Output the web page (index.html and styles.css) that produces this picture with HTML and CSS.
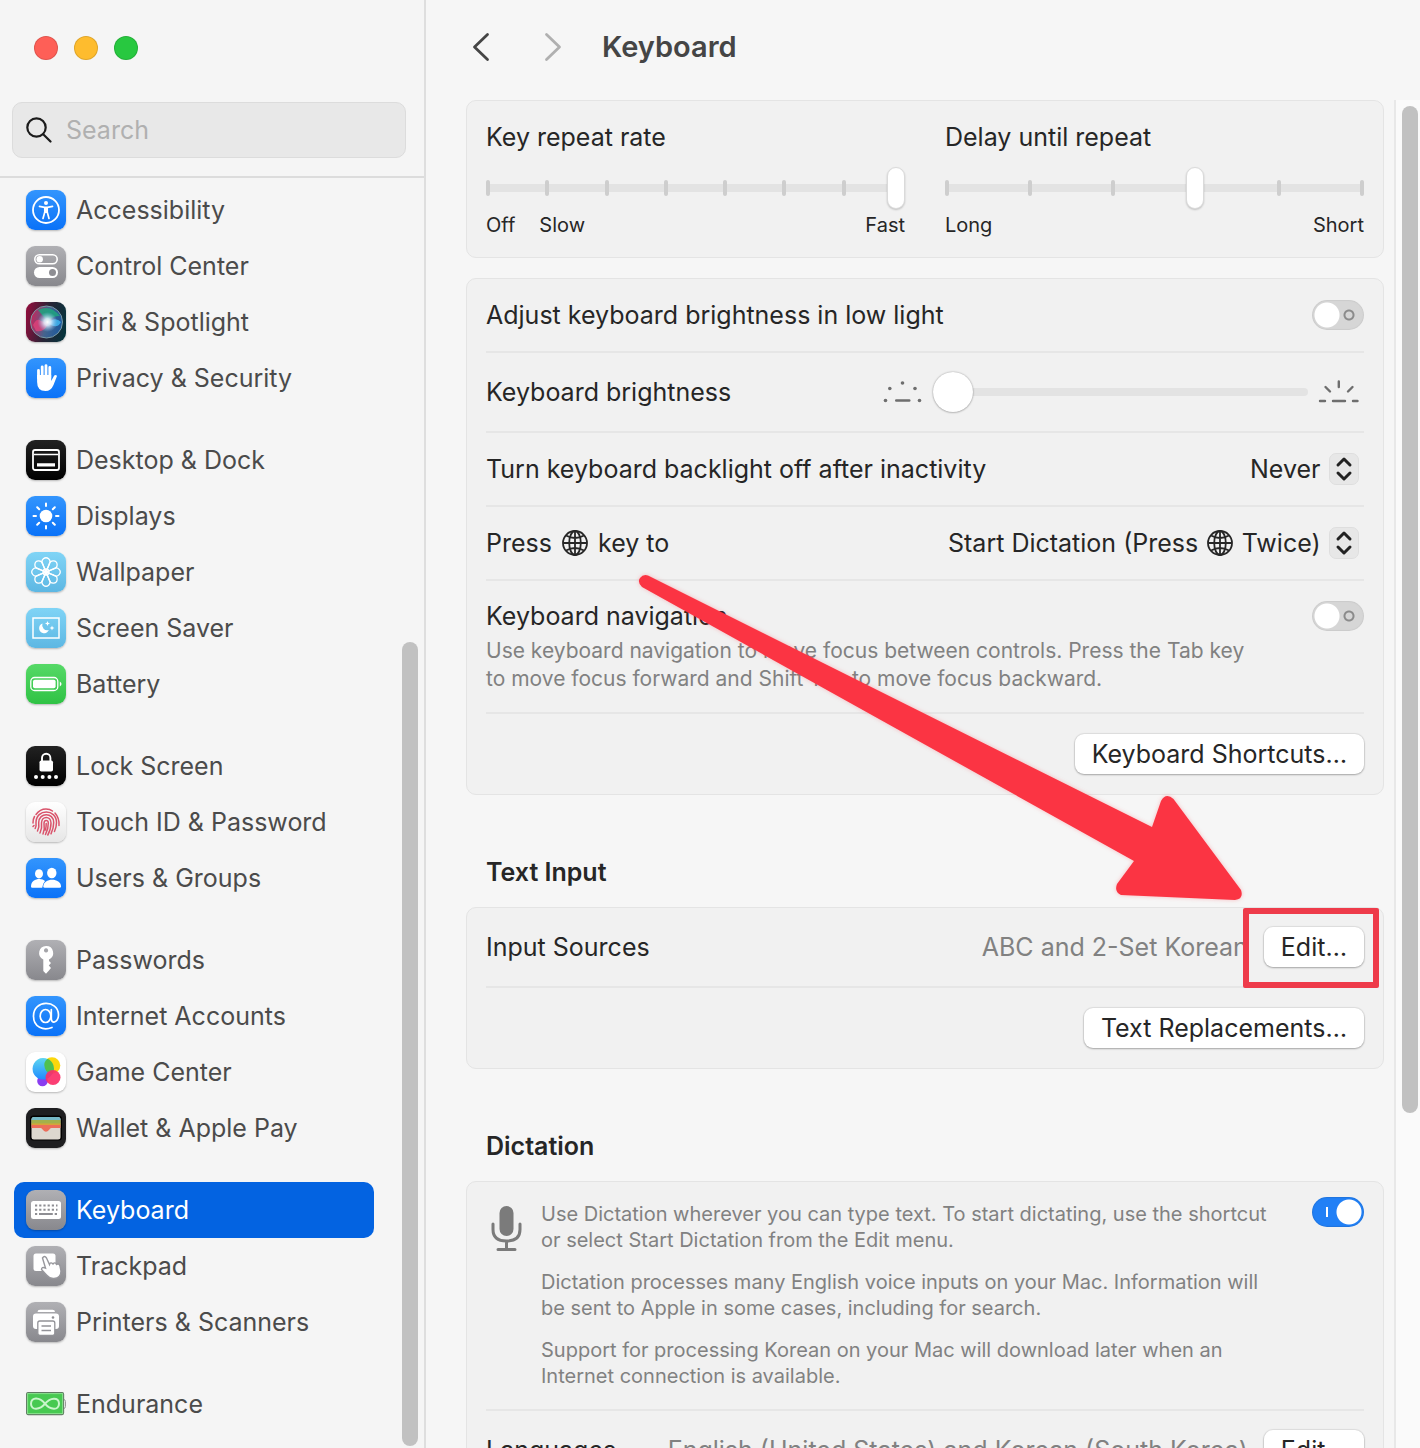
FILE: index.html
```html
<!DOCTYPE html>
<html lang="en">
<head>
	<meta charset="utf-8">
	<title>Keyboard</title>
	<link rel="stylesheet" href="styles.css">
</head>
<body>
	<aside class="sidebar">
		<div class="lights">
			<button class="light red" aria-label="Close"></button>
			<button class="light yellow" aria-label="Minimize"></button>
			<button class="light green" aria-label="Zoom"></button>
		</div>

		<label class="search">
			<svg width="26" height="26" viewBox="0 0 26 26" fill="none" stroke="#1c1c1c" stroke-width="2.2" stroke-linecap="round"><circle cx="10.500" cy="10.500" r="9.200"/><path d="M17.200 17.200L24.500 24.500"/></svg>
			<input type="search" placeholder="Search" aria-label="Search">
		</label>

		<div class="side-body">
			<nav class="menu">
				<div class="group">
					<a href="#accessibility"><svg class="icon blue" viewBox="0 0 40 40"><circle cx="20" cy="20" r="13" fill="none" stroke="#fff" stroke-width="1.800"/><circle cx="20" cy="13" r="2" fill="#fff"/><path d="M13.500 16.300L18.500 17.300h3L26.500 16.300M18.800 17.500V22L17 28.500M21.200 17.500V22L23 28.500" fill="none" stroke="#fff" stroke-width="1.700" stroke-linecap="round"/><path d="M18 17h4v6h-4z" fill="#fff"/></svg>Accessibility</a>
					<a href="#control"><svg class="icon gray" viewBox="0 0 40 40"><rect x="8.800" y="8.800" width="22.400" height="9" rx="4.500" fill="none" stroke="#fff" stroke-width="1.600"/><circle cx="13.700" cy="13.300" r="3.200" fill="#fff"/><rect x="8" y="21" width="24" height="11" rx="5.500" fill="#fff"/><circle cx="26.500" cy="26.500" r="3.500" fill="#8e8e93"/></svg>Control Center</a>
					<a href="#siri"><svg class="icon siri" viewBox="0 0 40 40">
						<defs>
							<linearGradient id="siri-bg" x1="0" y1=".4" x2="1" y2=".6"><stop offset="0" stop-color="#8a0f3c"/><stop offset=".5" stop-color="#2a2436"/><stop offset="1" stop-color="#06333c"/></linearGradient>
							<radialGradient id="siri-glow"><stop offset="0" stop-color="#fff"/><stop offset=".35" stop-color="#e6f3ff" stop-opacity=".85"/><stop offset="1" stop-color="#8fc0ee" stop-opacity="0"/></radialGradient>
							<linearGradient id="siri-ball" x1="0" y1=".4" x2="1" y2=".6"><stop offset="0" stop-color="#d32a62"/><stop offset=".5" stop-color="#4a6f9c"/><stop offset="1" stop-color="#1c5fae"/></linearGradient>
						</defs>
						<rect width="40" height="40" fill="url(#siri-bg)"/><circle cx="20.500" cy="20" r="16" fill="url(#siri-ball)" stroke="#7a9aa5" stroke-width="1" fill-opacity=".85"/>
						<path d="M12 8Q24 2 34 14Q27 13 22 20Z" fill="#1fa57f" opacity=".85"/><path d="M7 23q4-8 8-4l7 2q-3 10-12 8z" fill="#e8407a" opacity=".75"/><path d="M22 21q7-7 13-1q-4 8-13 1z" fill="#3fb5f0" opacity=".85"/><circle cx="21.500" cy="20" r="10" fill="url(#siri-glow)"/></svg>Siri &amp; Spotlight</a>
					<a href="#privacy"><svg class="icon blue" viewBox="0 0 40 40"><g fill="none" stroke="#fff" stroke-width="2.800" stroke-linecap="round"><path d="M12.500 20v-7.500M16.200 20V8.800M20 20V7.600M23.800 20V9.500"/></g><path d="M11.100 17H25.200V23L28.200 17.600Q30 16 31 18L27.500 27Q25 33 19.500 33Q11.100 33 11.100 24Z" fill="#fff"/></svg>Privacy &amp; Security</a>
				</div>
				<div class="group">
					<a href="#desktop"><svg class="icon black" viewBox="0 0 40 40"><rect x="7" y="10" width="26" height="20" rx="2" fill="none" stroke="#fff" stroke-width="1.800"/><path d="M8 14.500h24" stroke="#fff" stroke-width="1.300"/><path d="M11 23.300h18v3.200H11z" fill="#fff"/></svg>Desktop &amp; Dock</a>
					<a href="#displays"><svg class="icon blue" viewBox="0 0 40 40"><circle cx="20" cy="20" r="6.300" fill="#fff"/><path d="M20 7.500v2.500M20 30v2.500M7.500 20H10M30 20h2.500M11.200 11.200l2 2M26.800 26.800l2 2M11.200 28.800l2-2M26.800 13.200l2-2" stroke="#fff" stroke-width="2" stroke-linecap="round"/></svg>Displays</a>
					<a href="#wallpaper"><svg class="icon sky" viewBox="0 0 40 40"><g fill="none" stroke="#fff" stroke-width="1.300"><g id="petals"><path d="M20 20L16.800 12A3.900 3.900 0 1 1 23.200 12Z"/><path d="M20 20L28 16.800A3.900 3.900 0 1 1 28 23.200Z"/><path d="M20 20L23.200 28A3.900 3.900 0 1 1 16.800 28Z"/><path d="M20 20L12 23.200A3.900 3.900 0 1 1 12 16.800Z"/></g><use href="#petals" transform="rotate(45 20 20)"/><circle cx="20" cy="20" r="3"/></g></svg>Wallpaper</a>
					<a href="#saver"><svg class="icon sky" viewBox="0 0 40 40"><rect x="7" y="10" width="26" height="20" fill="none" stroke="#fff" stroke-width="1.500"/><path d="M16.500 15.500a5 5 0 1 0 6.300 6.500a5 5 0 0 1-6.300-6.500z" fill="#fff"/><path d="M21.500 13l.7 1.800l1.800.7l-1.800.7l-.7 1.800l-.7-1.800l-1.800-.7l1.800-.7zM26 17.500l.7 1.800l1.800.7l-1.800.7l-.7 1.800l-.7-1.800l-1.800-.7l1.800-.7z" fill="#fff"/></svg>Screen Saver</a>
					<a href="#battery"><svg class="icon lime" viewBox="0 0 40 40"><rect x="4.800" y="13.500" width="27" height="13" rx="3.800" fill="none" stroke="#fff" stroke-width="1.300"/><rect x="7" y="15.700" width="22.600" height="8.600" rx="1.800" fill="#fff"/><path d="M33.800 17.500q3.500 2.500 0 5z" fill="#fff"/></svg>Battery</a>
				</div>
				<div class="group">
					<a href="#lock"><svg class="icon black" viewBox="0 0 40 40"><rect x="13.500" y="14.500" width="13.500" height="11" rx="1.800" fill="#fff"/><path d="M16 15.500v-3.500a4.200 4.200 0 0 1 8.400 0v3.500" fill="none" stroke="#fff" stroke-width="1.900"/><g fill="#fff"><circle cx="10" cy="31" r="2"/><circle cx="16.700" cy="31" r="2"/><circle cx="23.400" cy="31" r="2"/><circle cx="30" cy="31" r="2"/></g></svg>Lock Screen</a>
					<a href="#touch"><svg class="icon white" viewBox="0 0 40 40"><g fill="none" stroke="#d9536b" stroke-width="1.500" stroke-linecap="round"><path d="M10 12.500Q14 7 20 7Q24 7 26.500 9M29 11Q33.500 16 33 23.500M7 21Q7 17 8.500 14.500M7 24.500L8 23.500M9.200 26.500Q10.500 24 10 20.500C10 6.500 30.500 6.500 30.500 20.500Q30.500 25 28.500 29.500M11.500 29Q13.500 25 12.700 20.500C13 10 27.700 10 27.700 20.500Q27.700 26.500 25 31.800M14 31Q16.300 26.500 15.500 21C15.500 13.500 25 13.500 25 21Q25 27.500 21.800 33M17 32Q19 27 18 21.500C18 17.500 22.300 17.500 22.300 21Q22.500 26.500 19.500 32.500M20.200 21.500Q20.300 25 19.300 28"/></g></svg>Touch ID &amp; Password</a>
					<a href="#users"><svg class="icon blue" viewBox="0 0 40 40"><g fill="#fff"><ellipse cx="13" cy="15.800" rx="4" ry="4.600"/><path d="M5 28.500C5 20 16 19.500 19 23Q16.500 26 16.200 29.800H6.300Q5 29.800 5 28.500z"/><ellipse cx="25.800" cy="15" rx="4.700" ry="5.200"/><path d="M17.300 28.500C17.300 19.500 35 19.500 35 28.500Q35 29.800 33.500 29.800H18.800Q17.300 29.800 17.300 28.500z"/></g></svg>Users &amp; Groups</a>
				</div>
				<div class="group">
					<a href="#passwords"><svg class="icon gray" viewBox="0 0 40 40"><path fill="#fff" fill-rule="evenodd" d="M20 6a7 7 0 0 1 3 13.400V21l2 2l-2.200 2.500l2.200 2.500l-2.500 3L20 33.800L17.300 31V19.400A7 7 0 0 1 20 6zM20 8.300a2.100 2.100 0 1 0 .1 0z"/></svg>Passwords</a>
					<a href="#internet"><svg class="icon blue" viewBox="0 0 40 40"><g fill="none" stroke="#fff" stroke-width="1.700" stroke-linecap="round"><ellipse cx="19.500" cy="20" rx="5.300" ry="6.500"/><path d="M25.300 13.500V22.500Q25.500 26.500 28.500 26Q32.500 24.500 32.500 18.500C32 3.500 7.500 3.500 7.500 20C7.500 31.500 17.500 34.800 26 31.500"/></g></svg>Internet Accounts</a>
					<a href="#game"><svg class="icon plain" viewBox="0 0 40 40">
						<defs><linearGradient id="game-blue" x1="0" y1="0" x2="0" y2="1"><stop offset="0" stop-color="#5fd6f0"/><stop offset="1" stop-color="#1f8bff"/></linearGradient></defs>
						<circle cx="26" cy="13.500" r="8.300" fill="#fcd70c"/><circle cx="16.500" cy="29" r="5.300" fill="#8a3df0"/><path d="M17 6a10.500 10.800 0 1 0 .1 0z" fill="url(#game-blue)"/><path d="M21.500 6.800a11 11 0 0 1 5.500 14.800a8.300 8.300 0 0 1-5.500-14.800z" fill="#50c04e"/><circle cx="27" cy="25.500" r="7.500" fill="#fb2f68" opacity=".92"/></svg>Game Center</a>
					<a href="#wallet"><svg class="icon wallet" viewBox="0 0 40 40"><rect x="4" y="7.500" width="32" height="25" rx="3.500" fill="#000"/><rect x="5.500" y="9" width="29" height="22.500" rx="2.500" fill="#ddd8ce"/><path d="M5.500 12V11.500a2.500 2.500 0 0 1 2.500-2.500h24a2.500 2.500 0 0 1 2.500 2.500V12z" fill="#75b8c6"/><path d="M5.500 12h29v4h-29z" fill="#a3b04b"/><path d="M5.500 15.500h29v2h-29z" fill="#d7a33a"/><path d="M5.500 17h29v3H25.500Q24 20 23 22Q20 25.500 17 22Q16 20 14.500 20h-9z" fill="#ec6d59"/></svg>Wallet &amp; Apple Pay</a>
				</div>
				<div class="group">
					<a href="#keyboard" class="active" aria-current="page"><svg class="icon gray" viewBox="0 0 40 40"><rect x="5" y="11" width="30" height="18" rx="2.500" fill="#fff"/><g stroke="#8e8e93" stroke-width="2" stroke-dasharray="2.200 2"><path d="M9 15.500h22.500M9 19.800h22.500"/><path d="M9 24h2.200M28.700 24h2.300" stroke-dasharray="none"/></g><path d="M13 24h13.800" stroke="#8e8e93" stroke-width="2"/></svg>Keyboard</a>
					<a href="#trackpad"><svg class="icon gray" viewBox="0 0 40 40"><rect x="7.500" y="7.500" width="22" height="17.500" rx="2.500" fill="#fff"/><path d="M16.500 12Q18.500 9 20.500 12L23.500 18.500Q24.500 15.500 27 18Q29 15.500 30.500 18.500Q33 17 34 20L35 25Q35 32 28 32.500Q24 33 20.500 29L15.500 23.500Q15.500 20.500 19.500 22Z" fill="#fff" stroke="#97979c" stroke-width="1.400"/></svg>Trackpad</a>
					<a href="#printers"><svg class="icon gray" viewBox="0 0 40 40"><path d="M11.500 10q0-2.200 2.500-2.200h12.500q2.500 0 2.500 2.200z" fill="#fff"/><rect x="7" y="11.500" width="26" height="15.500" rx="3" fill="#fff"/><circle cx="27" cy="15.500" r="1.300" fill="#8e8e93"/><rect x="11.800" y="19" width="17" height="14.300" rx="2" fill="#fff" stroke="#929297" stroke-width="1.300"/><path d="M15.500 24h9.500M15.500 28.500h9.500" stroke="#929297" stroke-width="1.500"/></svg>Printers &amp; Scanners</a>
				</div>
				<div class="group">
					<a href="#endurance"><svg class="icon flat" viewBox="0 0 40 40"><path d="M38 15.500q1.500.5 1.500 2v5q0 1.500-1.500 2" fill="none" stroke="#999" stroke-width="1"/><rect x=".6" y="8.600" width="37" height="22" rx="1.500" fill="#47c951" stroke="#5f7a62" stroke-width="1.100"/><rect x="1.600" y="9.600" width="35" height="20" fill="none" stroke="#8be08f"/><path d="M19 19.700C14 13 5 12.500 5 19.700S14 26 19 19.700S33 12.500 33 19.700S24 26 19 19.700z" fill="none" stroke="#c9f5cb" stroke-width="2"/></svg>Endurance</a>
				</div>
			</nav>
			<div class="scroll"><div class="thumb"></div></div>
		</div>
	</aside>

	<main class="main">
		<header class="top">
			<button class="nav-btn" aria-label="Back"><svg width="18" height="30" viewBox="0 0 18 30" fill="none" stroke="#454545" stroke-width="2.800" stroke-linecap="round" stroke-linejoin="round"><path d="M15.500 2.500L2.500 15l13 12.500"/></svg></button>
			<button class="nav-btn" aria-label="Forward"><svg width="18" height="30" viewBox="0 0 18 30" fill="none" stroke="#b0b0b0" stroke-width="2.800" stroke-linecap="round" stroke-linejoin="round"><path d="M2.500 2.500L15.500 15l-13 12.500"/></svg></button>
			<h1>Keyboard</h1>
		</header>

		<div class="main-body">
			<div class="content">
				<section class="card rates">
					<div class="rate">
						<label for="repeat">Key repeat rate</label>
						<div class="slider">
							<div class="ticks"><i></i><i></i><i></i><i></i><i></i><i></i><i></i><i></i></div>
							<input type="range" id="repeat" class="pill" min="0" max="7" value="7">
						</div>
						<div class="ends"><span>Off</span><span>Slow</span><span class="last">Fast</span></div>
					</div>
					<div class="rate">
						<label for="delay">Delay until repeat</label>
						<div class="slider">
							<div class="ticks"><i></i><i></i><i></i><i></i><i></i><i></i></div>
							<input type="range" id="delay" class="pill" min="0" max="5" value="3">
						</div>
						<div class="ends"><span>Long</span><span class="last">Short</span></div>
					</div>
				</section>

				<section class="card">
					<div class="row">
						<label for="adjust">Adjust keyboard brightness in low light</label>
						<input type="checkbox" id="adjust" class="switch">
					</div>
					<div class="row">
						<label for="bright">Keyboard brightness</label>
						<div class="bright">
							<svg width="40" height="26" viewBox="0 0 40 26" fill="#6e6e6e"><circle cx="2.500" cy="21.500" r="1.800"/><circle cx="6.800" cy="9.500" r="1.800"/><circle cx="19.500" cy="4" r="1.800"/><circle cx="32" cy="9.500" r="1.800"/><circle cx="36.500" cy="21.500" r="1.800"/><rect x="12" y="20.300" width="15.500" height="2.400" rx="1.200"/></svg>
							<input type="range" id="bright" class="round" value="0">
							<svg width="42" height="26" viewBox="0 0 42 26" stroke="#6e6e6e" stroke-width="2.400" stroke-linecap="round"><path d="M2 22h5M15 22h12M35 22h4.500M7.500 8l4.500 4.500M20.800 2.500v5.500M34.500 8L30 12.500"/></svg>
						</div>
					</div>
					<div class="row">
						<label for="off">Turn keyboard backlight off after inactivity</label>
						<select id="off"><option>Never</option></select>
					</div>
					<div class="row">
						<label for="globe">Press <svg class="globe" viewBox="0 0 26 26" fill="none" stroke="#262626" stroke-width="1.800"><circle cx="13" cy="13" r="12"/><ellipse cx="13" cy="13" rx="5.800" ry="12"/><path d="M13 1v24M1 13h24M4 5.500q9 5 18 0M4 20.500q9-5 18 0"/></svg> key to</label>
						<select id="globe" class="with-globe"><option>Start Dictation (Press &emsp;&thinsp; Twice)</option></select>
					</div>
					<div class="row nav-row">
						<div>
							<label for="navigation">Keyboard navigation</label>
							<p>Use keyboard navigation to move focus between controls. Press the Tab key to move focus forward and Shift Tab to move focus backward.</p>
						</div>
						<input type="checkbox" id="navigation" class="switch">
					</div>
					<div class="row end">
						<button class="btn">Keyboard Shortcuts…</button>
					</div>
				</section>

				<h2>Text Input</h2>
				<section class="card">
					<div class="row">
						<span>Input Sources</span>
						<div class="value">
							<span>ABC and 2-Set Korean</span>
							<div class="marked">
								<button class="btn">Edit…</button>
								<svg class="arrow" width="605" height="328" viewBox="638 573 605 328"><path d="M648 574.500L1152 826L1161 800Q1166 791 1173.500 798L1241 889Q1244 898 1235 899L1121 894Q1114 891 1117 883L1134 860L642 586Q637 581 640 577Q643 573 648 574.500z" fill="#fb3443"/></svg>
							</div>
						</div>
					</div>
					<div class="row end">
						<button class="btn">Text Replacements…</button>
					</div>
				</section>

				<h2>Dictation</h2>
				<section class="card">
					<div class="row dictation">
						<svg width="32" height="46" viewBox="0 0 32 46"><rect x="8.500" y="0" width="14" height="30" rx="7" fill="#7b7b7b"/><path d="M2 18v5.500q0 11.500 13.500 11.500T29 23.500V18M15.500 35v8M7 43.500h17" fill="none" stroke="#7b7b7b" stroke-width="3" stroke-linecap="round"/></svg>
						<div class="notes" id="dictation-notes">
							<p>Use Dictation wherever you can type text. To start dictating, use the shortcut or select Start Dictation from the Edit menu.</p>
							<p>Dictation processes many English voice inputs on your Mac. Information will be sent to Apple in some cases, including for search.</p>
							<p>Support for processing Korean on your Mac will download later when an Internet connection is available.</p>
						</div>
						<input type="checkbox" class="switch" aria-label="Dictation" aria-describedby="dictation-notes" checked>
					</div>
					<div class="row">
						<span>Languages</span>
						<div class="value">
							<span>English (United States) and Korean (South Korea)</span>
							<button class="btn">Edit…</button>
						</div>
					</div>
				</section>
			</div>
			<div class="scroll"><div class="thumb"></div></div>
		</div>
	</main>
</body>
</html>
```
FILE: styles.css
```css
* {
	box-sizing: border-box;
}

body {
	margin: 0;
	height: 100vh;
	overflow: hidden;
	display: grid;
	grid-template-columns: 426px minmax(0, 1fr);
	background-color: #f6f6f6;
	color: #262626;
	font-family: Inter, "Liberation Sans", sans-serif;
	font-size: 25px;
	line-height: 30px;
}

button,
input,
select {
	font: inherit;
	color: inherit;
	margin: 0;
}

p {
	margin: 0;
}

/* sidebar */

.sidebar {
	display: flex;
	flex-direction: column;
	min-height: 0;
	background-color: #f5f5f5;
	border-right: 2px solid #dedede;
}

.lights {
	display: flex;
	gap: 16px;
	padding: 36px 34px 42px;
}

.light {
	width: 24px;
	height: 24px;
	padding: 0;
	border: 1px solid rgba(0, 0, 0, 0.12);
	border-radius: 50%;
}

.red {
	background-color: #fe5f57;
}

.yellow {
	background-color: #febc2e;
}

.green {
	background-color: #28c840;
}

.search {
	display: flex;
	align-items: center;
	gap: 14px;
	height: 56px;
	margin: 0 18px 18px 12px;
	padding: 0 13px;
	background-color: #e8e8e8;
	border: 1px solid #dcdcdc;
	border-radius: 10px;
}

.search input {
	flex: 1;
	min-width: 0;
	padding: 0;
	border: none;
	outline: none;
	background: none;
}

.search input::placeholder {
	color: #b0b0b0;
}

.side-body {
	flex: 1;
	min-height: 0;
	display: flex;
	border-top: 2px solid #dcdcdc;
}

.menu {
	flex: 1;
	display: flex;
	flex-direction: column;
	gap: 26px;
	padding: 4px 28px 0 14px;
	overflow: hidden;
}

.menu a {
	display: flex;
	align-items: center;
	gap: 10px;
	height: 56px;
	padding: 0 12px;
	border-radius: 10px;
	color: #4b4b4b;
	text-decoration: none;
	white-space: nowrap;
}

.menu .active {
	background-color: #0363e1;
	color: #fff;
}

.icon {
	flex: none;
	width: 40px;
	height: 40px;
	border-radius: 9px;
	box-shadow: 0 1px 2px rgba(0, 0, 0, 0.25);
}

.blue {
	background: linear-gradient(#3395fd, #0a72f8);
}

.gray {
	background: linear-gradient(#b0b0b4, #88888d);
}

.black {
	background: linear-gradient(#222, #000);
}

.sky {
	background: linear-gradient(#80d4f6, #5db7e3);
}

.lime {
	background: linear-gradient(#56d967, #2fc244);
}

.white {
	background: linear-gradient(#fff, #e6e6e6);
}

.plain {
	background: #fff;
}

.wallet {
	background: #1e1e20;
}

.flat {
	border-radius: 0;
	box-shadow: none;
}

.scroll {
	display: flex;
}

.thumb {
	width: 16px;
	border-radius: 8px;
	background-color: #c1c1c1;
}

.sidebar .scroll {
	align-items: flex-end;
	padding: 0 6px 2px 0;
}

.sidebar .thumb {
	height: 63.4%;
}

/* main pane */

.main {
	display: flex;
	flex-direction: column;
	min-width: 0;
	min-height: 0;
}

.top {
	flex: none;
	display: flex;
	align-items: center;
	height: 100px;
	padding: 0 40px 6px 46px;
}

.nav-btn {
	display: flex;
	width: 72px;
	padding: 0;
	border: none;
	background: none;
}

.nav-btn + h1 {
	margin-left: -14px;
}

h1 {
	margin: 0;
	font-size: 29px;
	font-weight: 600;
	color: #454545;
}

.main-body {
	flex: 1;
	min-height: 0;
	display: flex;
}

.content {
	flex: 1;
	min-width: 0;
	padding: 0 10px 0 40px;
	overflow: hidden;
}

.main .scroll {
	align-items: flex-start;
	padding: 6px 2px 0 6px;
	background-color: #fafafa;
	border-left: 2px solid #e8e8e8;
}

.main .thumb {
	height: 75%;
}

.card {
	padding: 0 19px;
	background-color: #f1f1f1;
	border: 1px solid #e4e4e4;
	border-radius: 10px;
}

.card + .card {
	margin-top: 20px;
}

h2 {
	margin: 62px 20px 20px;
	font-size: 25px;
	font-weight: 600;
	line-height: 30px;
}

.rates {
	display: grid;
	grid-template-columns: 1fr 1fr;
	gap: 40px;
	padding-top: 21px;
	padding-bottom: 20px;
}

.rate label {
	display: block;
	margin-bottom: 15px;
}

.slider {
	display: grid;
	height: 42px;
	margin-bottom: 4px;
}

.slider input,
.ticks {
	grid-area: 1 / 1;
	width: 100%;
}

.ticks {
	display: flex;
	justify-content: space-between;
	align-items: center;
	background: linear-gradient(#e3e3e3, #e3e3e3) center / 100% 8px no-repeat;
}

.ticks i {
	width: 4px;
	height: 16px;
	border-radius: 2px;
	background-color: #cecece;
}

.ends {
	display: flex;
	gap: 24px;
	font-size: 20px;
	line-height: 24px;
}

.last {
	margin-left: auto;
}

input[type="range"] {
	appearance: none;
	min-width: 0;
	background: none;
}

.pill::-webkit-slider-thumb {
	appearance: none;
	width: 18px;
	height: 42px;
	border: 1px solid #dadada;
	border-radius: 9px;
	background-color: #fff;
	box-shadow: 0 1px 2px rgba(0, 0, 0, 0.2);
}

.round::-webkit-slider-runnable-track {
	height: 8px;
	border-radius: 4px;
	background-color: #e3e3e3;
}

.round::-webkit-slider-thumb {
	appearance: none;
	width: 40px;
	height: 40px;
	margin-top: -16px;
	border-radius: 50%;
	background-color: #fff;
	box-shadow: 0 0 2px rgba(0, 0, 0, 0.35), 0 1px 2px rgba(0, 0, 0, 0.15);
}

.row {
	display: flex;
	align-items: center;
	justify-content: space-between;
	min-height: 74px;
	padding: 19px 0;
	border-bottom: 2px solid #e6e6e6;
}

.row:last-child {
	border-bottom: none;
}

.end {
	justify-content: flex-end;
	padding: 20px 0;
}

.bright {
	display: flex;
	align-items: center;
	gap: 10px;
	width: 55%;
	padding: 0 4px 0 2px;
}

.bright svg {
	flex: none;
}

.bright input {
	flex: 1;
	height: 40px;
}

.switch {
	appearance: none;
	flex: none;
	width: 52px;
	height: 30px;
	border-radius: 15px;
	background:
		radial-gradient(circle at 15px 15px, #fff 12px, transparent 13px),
		radial-gradient(circle at 37px 15px, transparent 3px, #8b8b8b 4px, #8b8b8b 5px, transparent 6px),
		#d6d6d6;
	box-shadow: inset 0 0 1px 1px #cbcbcb;
}

.switch:checked {
	background:
		radial-gradient(circle at 37px 15px, #fff 12px, transparent 13px),
		linear-gradient(#fff, #fff) 14px 10px / 2px 10px no-repeat,
		#2180f6;
	box-shadow: inset 0 0 1px 1px #2174dd;
}

.globe {
	width: 26px;
	height: 26px;
	margin: 0 3px;
	vertical-align: -4px;
}

select {
	appearance: none;
	height: 32px;
	padding: 0 43px 0 0;
	border: none;
	background: url("data:image/svg+xml,%3Csvg xmlns='http://www.w3.org/2000/svg' width='30' height='32'%3E%3Crect x='.5' y='.5' width='29' height='31' rx='6.5' fill='%23e7e7e7' stroke='%23dedede'/%3E%3Cpath d='M9 12l6-6 6 6M9 20l6 6 6-6' fill='none' stroke='%23222' stroke-width='3' stroke-linecap='round' stroke-linejoin='round'/%3E%3C/svg%3E") right 5px center no-repeat;
}

.with-globe {
	background-image:
		url("data:image/svg+xml,%3Csvg xmlns='http://www.w3.org/2000/svg' width='30' height='32'%3E%3Crect x='.5' y='.5' width='29' height='31' rx='6.5' fill='%23e7e7e7' stroke='%23dedede'/%3E%3Cpath d='M9 12l6-6 6 6M9 20l6 6 6-6' fill='none' stroke='%23222' stroke-width='3' stroke-linecap='round' stroke-linejoin='round'/%3E%3C/svg%3E"),
		url("data:image/svg+xml,%3Csvg xmlns='http://www.w3.org/2000/svg' width='26' height='26' fill='none' stroke='%23262626' stroke-width='1.800'%3E%3Ccircle cx='13' cy='13' r='12'/%3E%3Cellipse cx='13' cy='13' rx='5.800' ry='12'/%3E%3Cpath d='M13 1v24M1 13h24M4 5.500q9 5 18 0M4 20.500q9-5 18 0'/%3E%3C/svg%3E");
	background-position: right 5px center, right 131px center;
}

.nav-row {
	align-items: flex-start;
	padding-top: 20px;
}

.nav-row p {
	max-width: 800px;
	padding-top: 6px;
	padding-right: 20px;
	color: #818181;
	font-size: 21px;
	line-height: 28px;
}

.btn {
	height: 40px;
	padding: 0 17px;
	border: none;
	border-radius: 9px;
	background-color: #fff;
	box-shadow: 0 0 1px 1px rgba(0, 0, 0, 0.08), 0 1px 2px rgba(0, 0, 0, 0.25);
	white-space: nowrap;
}

.value {
	display: flex;
	align-items: center;
	gap: 16px;
	color: #818181;
	white-space: nowrap;
}

.value .btn {
	color: #262626;
}

/* callout around the Edit button */

.marked {
	position: relative;
}

.marked::after {
	content: "";
	position: absolute;
	inset: -19px -15px -21px -21px;
	border: 6px solid #ee3b4a;
	border-radius: 2px;
	pointer-events: none;
}

.arrow {
	position: absolute;
	right: 121px;
	bottom: 65px;
	filter: drop-shadow(0 0 2px rgba(251, 52, 67, 0.3));
	pointer-events: none;
}

.dictation {
	align-items: flex-start;
	padding: 15px 0 20px;
}

.dictation svg {
	flex: none;
	margin: 9px 18px 0 5px;
}

.notes {
	flex: 1;
	display: grid;
	gap: 16px;
	padding: 4px 32px 0 0;
	color: #818181;
	font-size: 20px;
	line-height: 26px;
}
```
